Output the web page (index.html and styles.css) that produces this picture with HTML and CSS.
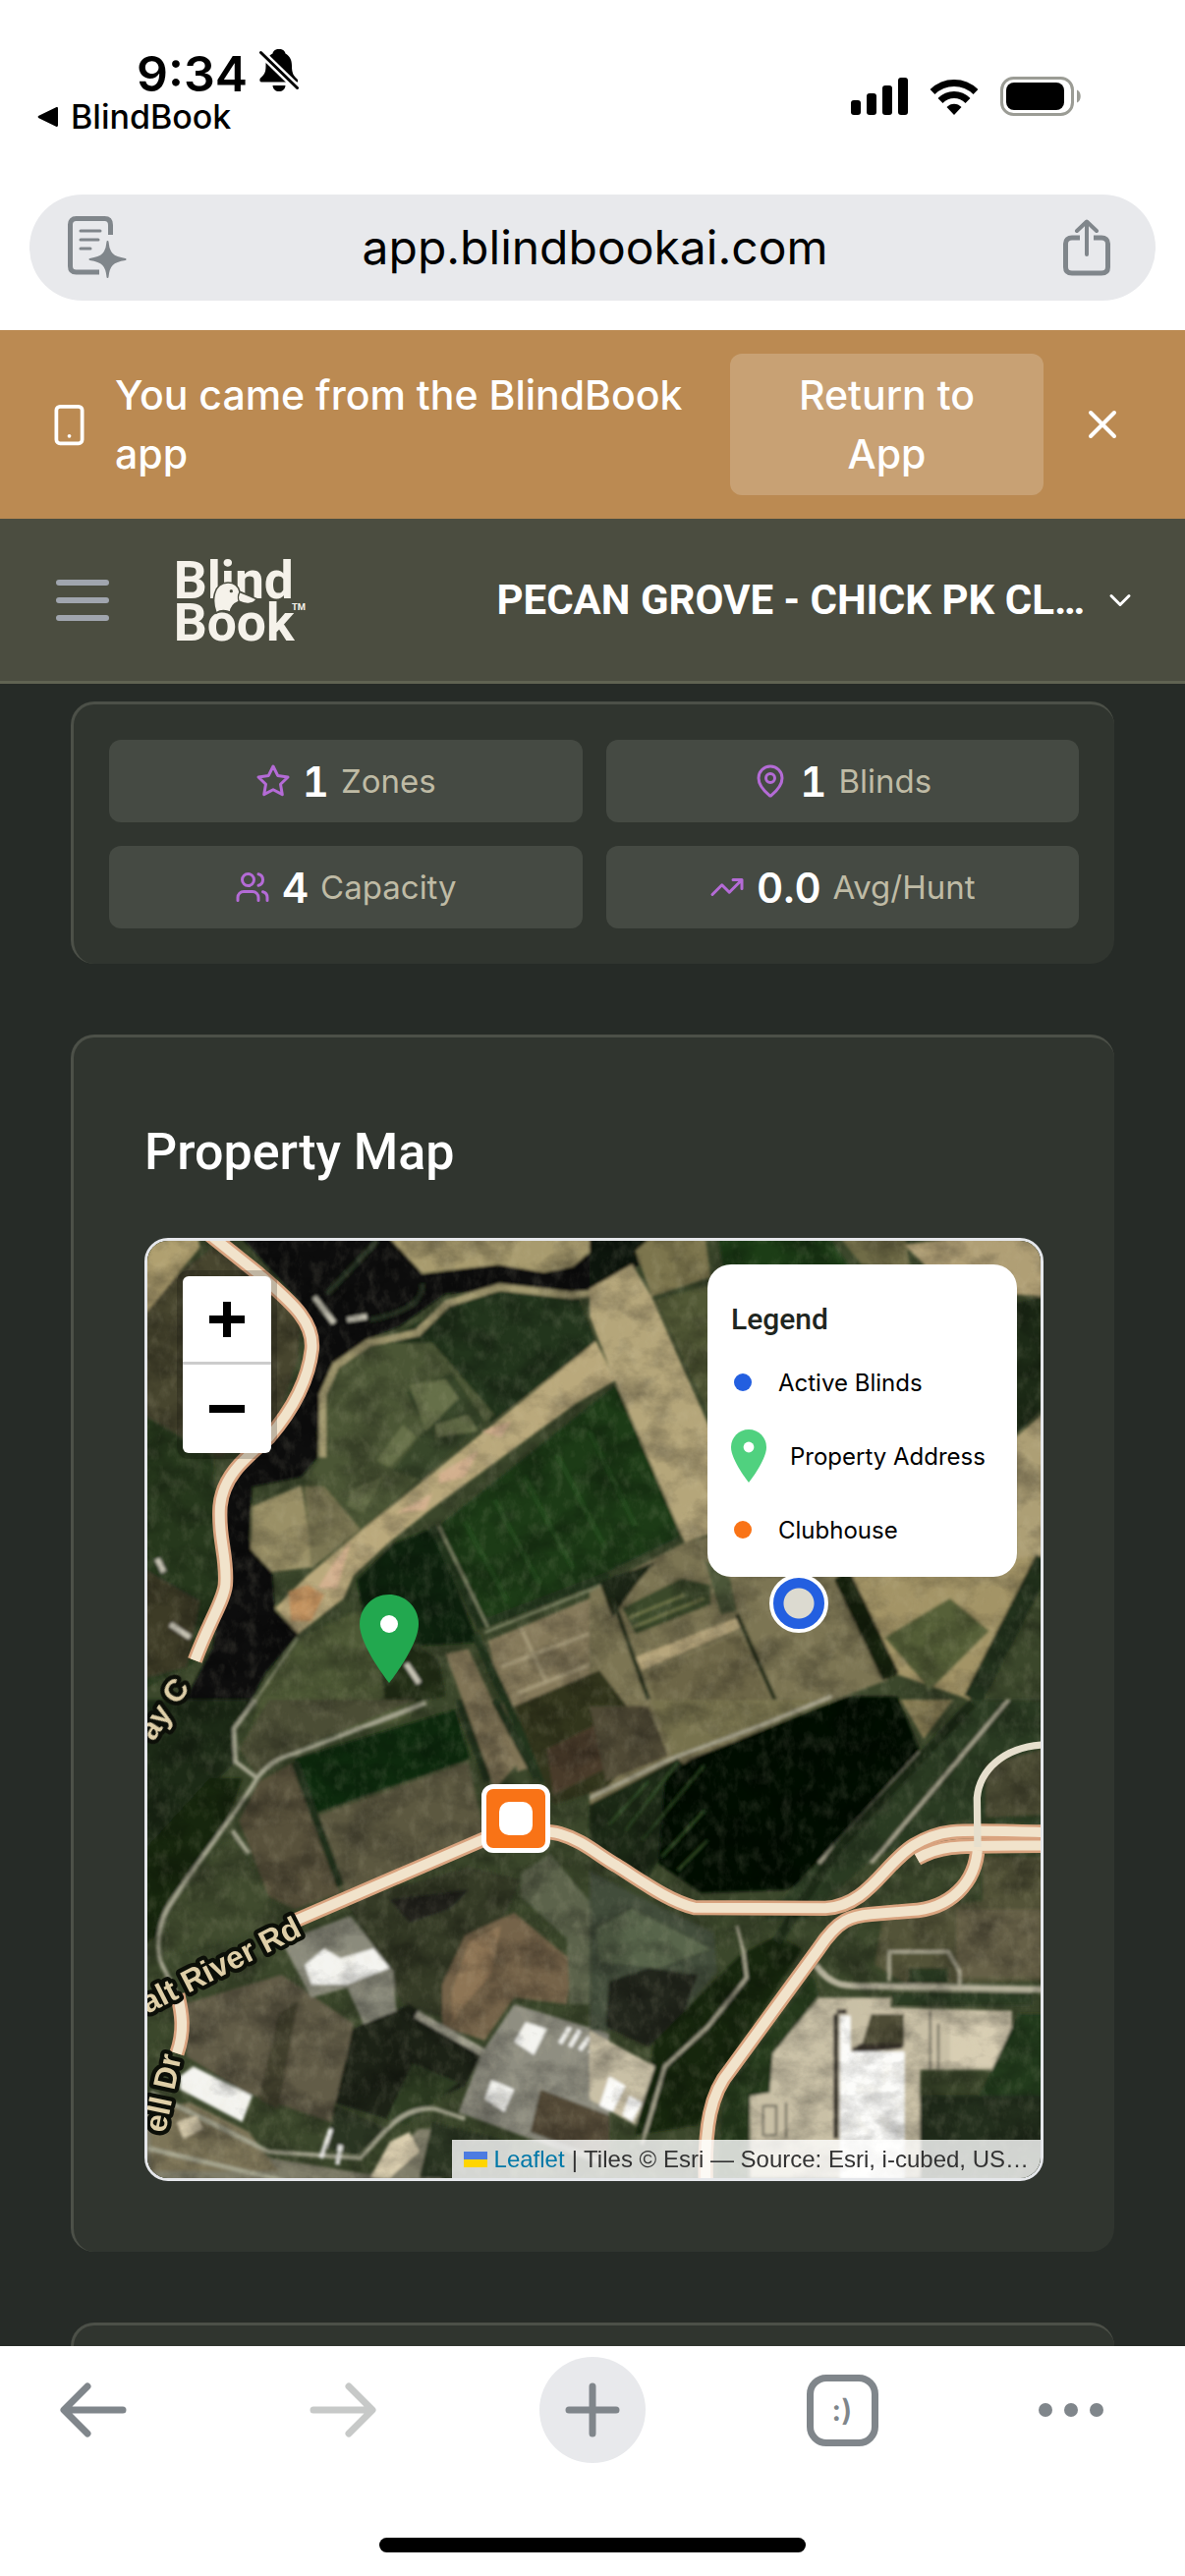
FILE: index.html
```html
<!DOCTYPE html>
<html lang="en">
<head>
    <meta charset="UTF-8">
    <meta name="viewport" content="width=device-width, initial-scale=1">
    <title>BlindBook</title>
    <link rel="stylesheet" href="styles.css">
</head>
<body>
<div class="status">
    <div class="status-left">
        <div class="clock">
            <span>9:34</span>
            <svg class="bell" viewBox="0 0 40 44" aria-hidden="true">
                <path d="M20 0c4 0 6 2 6.500 4.500C31 7 33 11 33 17c0 8 2 10 5 13 1 1 1.500 2 1 3.500H2.500C0 33.500 0 31 1 29.500 5 26 6.500 24 6.500 17c0-6 2-10 7-12.500C14 2 16 0 20 0zM13.500 37h13c-.5 4-3 6-6.500 6s-6-2-6.500-6z"/>
                <path d="M1 3l38 37" stroke="#fff" stroke-width="8"/>
                <path d="M1.500 3.500l37 36" stroke="#000" stroke-width="3" stroke-linecap="round"/>
            </svg>
        </div>
        <a class="back-app" href="#">
            <svg class="triangle" viewBox="0 0 22 22" aria-hidden="true"><path d="M1.500 9.800L19 1.300c1.200-.5 2 0 2 1.200v17c0 1.200-.8 1.700-2 1.200L1.500 12.200c-1.200-.7-1.200-1.700 0-2.400z"/></svg>
            <span>BlindBook</span>
        </a>
    </div>
    <div class="status-right">
        <svg class="signal" viewBox="0 0 58 38" aria-hidden="true">
            <rect x="0" y="23" width="10" height="15" rx="3"/>
            <rect x="16" y="16" width="10" height="22" rx="3"/>
            <rect x="32" y="8" width="10" height="30" rx="3"/>
            <rect x="48" y="0" width="10" height="38" rx="3"/>
        </svg>
        <svg class="wifi" viewBox="0 0 52 38" aria-hidden="true">
            <path d="M26 38l-7.500-8c4-4.500 11-4.500 15 0z"/>
            <path d="M12 23.500c8-8 20-8 28 0M4 14.500c12.500-12 31.500-12 44 0" fill="none" stroke="#000" stroke-width="7"/>
        </svg>
        <svg class="battery" viewBox="0 0 84 40" aria-hidden="true">
            <rect x="1.500" y="1.500" width="72" height="37" rx="12" fill="none" stroke="#9b9c95" stroke-width="3"/>
            <rect x="6" y="6" width="59" height="28" rx="8"/>
            <path d="M78 13.500c5 2 5 11 0 13z" fill="#9b9c95"/>
        </svg>
    </div>
</div>

<div class="address">
    <button class="plain" type="button" aria-label="Reader">
        <svg class="page-icon" viewBox="0 0 60 64" fill="none" stroke="#80868b" aria-hidden="true">
            <path d="M43.500 19V9c0-4-2-6.500-6-6.500H8.500c-4 0-6 2.500-6 6v42.500c0 4 2 6 6 6H32" stroke-width="5"/>
            <path d="M13 15h20M13 24h18M13 33h10" stroke-width="3" stroke-linecap="round"/>
            <path d="M40.500 26c1 12 5 16 18 18-13 2-17 6-18 18-1-12-5-16-18-18 13-2 17-6 18-18z" fill="#80868b" stroke-width="2" stroke-linejoin="round"/>
        </svg>
    </button>
    <input class="url" type="text" value="app.blindbookai.com" aria-label="Address" readonly>
    <button class="plain" type="button" aria-label="Share">
        <svg class="share-icon" viewBox="0 0 48 58" fill="none" stroke="#80868b" aria-hidden="true">
            <path d="M17 19H9c-4 0-6.500 2.500-6.500 6v24c0 4 2.500 6 6.500 6h30c4 0 6.500-2 6.500-6V25c0-3.500-2.500-6-6.500-6h-8" stroke-width="5"/>
            <path d="M24 36V3M14 12L24 2.500l10 9.500" stroke-width="4" stroke-linecap="round" stroke-linejoin="round"/>
        </svg>
    </button>
</div>

<div class="banner">
    <svg class="phone-icon" viewBox="0 0 24 24" aria-hidden="true">
        <rect x="5" y="2" width="14" height="20" rx="2"/>
        <path d="M12 18h.01"/>
    </svg>
    <p class="banner-text">You came from the BlindBook app</p>
    <button class="return" type="button">Return to App</button>
    <button class="close" type="button" aria-label="Close">
        <svg class="close-icon" viewBox="0 0 24 24" aria-hidden="true"><path d="M18 6L6 18M6 6l12 12"/></svg>
    </button>
</div>

<header class="header">
    <button class="plain" type="button" aria-label="Menu">
        <svg class="menu-icon" viewBox="0 0 24 24" aria-hidden="true"><path d="M4 6h16M4 12h16M4 18h16"/></svg>
    </button>
    <svg class="logo" viewBox="54 50 402 270" role="img" aria-label="BlindBook">
        <g fill="#f5f2ea" font-family="Roboto, sans-serif" font-weight="700">
            <text x="50" y="178" font-size="160">Blind</text>
            <text x="50" y="308" font-size="160">Book</text>
            <text x="411" y="214" font-size="28">TM</text>
            <path d="M180 224c-14-36-10-92 36-93 20 0 32 12 36 28l52 22c-10 18-36 18-54 8-14 6-26 16-26 33-14-6-32-6-44 2z" stroke="#4b4d40" stroke-width="5"/>
        </g>
        <path d="M252 160c-6 10-6 20-2 30" fill="none" stroke="#4b4d40" stroke-width="4"/>
        <circle cx="226" cy="157" r="5" fill="#4b4d40"/>
    </svg>
    <button class="club" type="button">
        <span>PECAN GROVE - CHICK PK CL…</span>
        <svg class="chevron" viewBox="0 0 24 24" aria-hidden="true"><path d="M6 9l6 6 6-6"/></svg>
    </button>
</header>

<main class="main">
    <section class="card stats">
        <div class="stat">
            <svg class="stat-icon" viewBox="0 0 24 24" aria-hidden="true"><path d="M12 2l3.100 6.300 6.900 1-5 4.900 1.200 6.900L12 17.800l-6.200 3.300L7 14.200 2 9.300l6.900-1z"/></svg>
            <strong>1</strong><span>Zones</span>
        </div>
        <div class="stat">
            <svg class="stat-icon" viewBox="0 0 24 24" aria-hidden="true"><path d="M20 10c0 5-5.500 10.200-7.400 11.800a1 1 0 0 1-1.200 0C9.500 20.200 4 15 4 10a8 8 0 0 1 16 0"/><circle cx="12" cy="10" r="3"/></svg>
            <strong>1</strong><span>Blinds</span>
        </div>
        <div class="stat">
            <svg class="stat-icon" viewBox="0 0 24 24" aria-hidden="true"><path d="M16 21v-2a4 4 0 0 0-4-4H6a4 4 0 0 0-4 4v2"/><circle cx="9" cy="7" r="4"/><path d="M22 21v-2a4 4 0 0 0-3-3.870M16 3.130a4 4 0 0 1 0 7.750"/></svg>
            <strong>4</strong><span>Capacity</span>
        </div>
        <div class="stat">
            <svg class="stat-icon" viewBox="0 0 24 24" aria-hidden="true"><path d="M22 7l-8.500 8.500-5-5L2 17M16 7h6v6"/></svg>
            <strong>0.0</strong><span>Avg/Hunt</span>
        </div>
    </section>

    <section class="card property">
        <h2>Property Map</h2>
        <div class="map">
            <svg class="tiles" viewBox="30 39 2727 2862" preserveAspectRatio="xMidYMid slice" aria-hidden="true">
                <defs>
                    <filter id="soft"><feGaussianBlur stdDeviation="4"/></filter>
                    <filter id="grain" x="0" y="0" width="100%" height="100%">
                        <feTurbulence type="fractalNoise" baseFrequency="0.008 0.011" numOctaves="5" seed="7"/>
                        <feColorMatrix values="0 0 0 0 0  0 0 0 0 0  0 0 0 0 0  2 0 0 0 -.8"/>
                    </filter>
                    <filter id="light" x="0" y="0" width="100%" height="100%">
                        <feTurbulence type="fractalNoise" baseFrequency="0.03 0.02" numOctaves="4" seed="21"/>
                        <feColorMatrix values="0 0 0 0 .75  0 0 0 0 .7  0 0 0 0 .5  0 2 0 0 -.9"/>
                    </filter>
                </defs>
                <rect x="0" y="0" width="2800" height="2940" fill="#3b472b"/>
                <g filter="url(#soft)">
                    <!-- north west -->
                    <path fill="#46452f" d="M0 250L150 120 230 60l270 190-10 150-70 200-170 100L0 560z"/>
                    <path fill="#b0a06f" d="M0 0h180l10 60L0 290z"/>
                    <path fill="#26391f" d="M0 560l230 140 20 450-80 180L0 1420z"/>
                    <path fill="#3d3a28" d="M0 1030l190 110-40 200L0 1380z"/>
                    <path fill="#071109" d="M290 0h470l110 140 230-30 150 25 80-25 160-110v190l-150 10-240-10-160 10-140 100-100 40-100 80-40 80-10 200-50 60-150 30-10 160 70 100 10 120 70 70-100 120-90 170-110 40-50-120 90-170 40-260-20-200 90-150 150-160 60-160-60-130z"/>
                    <path fill="none" stroke="#263322" stroke-width="14" d="M580 200L730 40M870 170c0 60-60 90-160 110"/>
                    <path fill="#a89b6e" d="M740 0h720l-130 118-90 17-140-23-230 26z"/>
                    <path fill="#21341a" d="M930 240l170-50 240 10 60 150-320 240-190-130-150-100z"/>
                    <path fill="#4c5735" d="M600 440l100-90 200 0 190 220-90 70-320 290-150 110-30-240 60-100 10-200z"/>
                    <path fill="#38472a" d="M820 500l60 110-100 130 90 30 130-130 60-50-100-150z"/>
                    <path fill="#667048" d="M830 480l110-20 40 60-100 100zM910 600l100-30 30 50-130 20zM730 710l80-110 40 40-80 90zM650 800l100-40-60 110-50-20z"/>
                    <path fill="none" stroke="#a39a70" stroke-width="22" d="M565 700l0-190 40-90 100-70 150-30 90-90 160-50 220 25 70-5"/>
                    <path fill="#9a9066" d="M350 850l150-65 40 250-130 15-65-70z"/>
                    <path fill="#7b7752" d="M510 790l60 0 110 130-150 120z"/>
                    <path fill="#baa97c" d="M1400 345l60 120-120 70-440 320-120 95-120 110-30 70-140 110-70-80 100-100 180-150z"/>
                    <path fill="#d3b08e" d="M920 750l120-70-40 80-80 20zM790 870l110-60-20 50zM600 1020l50-60-40 140-60 0zM1050 620l90-30-30 50z"/>
                    <path fill="#c4935f" d="M460 1110l60-20 50 30-40 80-60 0z"/>
                    <path fill="#1b3a15" d="M920 910l540-430 200 460-290 140-320 130z"/>
                    <path fill="none" stroke="#244a1d" stroke-width="14" d="M1000 900l130 240M1090 830l140 260M1180 760l150 280M1280 690l150 290M1380 620l140 290"/>
                    <path fill="#0c240a" d="M900 915l-120 50-110 110 20 110 170 90 180-10z"/>
                    <path fill="#4e5835" d="M500 1250l170-80 60 90 110 60-100 120 150 10-100 60-430 80 0-150z"/>
                    <path fill="#85795a" d="M1070 1260l360-150 90 300-170 190-190 60z"/>
                    <path fill="none" stroke="#a39777" stroke-width="12" d="M1170 1220l80 170M1110 1340l320-120M1160 1420l280-110"/>
                    <path fill="#232d19" d="M730 1280l100-20 90 60 20 110-180 30z"/>
                    <path fill="#7f7354" d="M940 1300l70-15 160 340-80 90z"/>
                    <path fill="none" stroke="#24361c" stroke-width="26" d="M1030 1240l210 450M1050 1210l390-150M900 910l150 310"/>
                    <path fill="none" stroke="#8a9070" stroke-width="7" d="M920 910l150 310M490 1250l-130 190M1060 1235l385-155"/>
                    <path fill="none" stroke="#c7c4b5" stroke-width="16" d="M540 210l60 80M640 280l60-10M60 1010l20 40M100 1210l60 40M820 1330l40 60"/>
                    <!-- north east -->
                    <g transform="translate(1380 0)">
                        <path fill="#0b160b" d="M0 20h260l-100 90-160 80z"/>
                        <path fill="#7b754e" d="M140 70l80-70 130 0 20 150-180 60z"/>
                        <path fill="#1a3d16" d="M390 0h320l90 130-390 0z"/>
                        <path fill="#6f6c46" d="M740 0h220l20 130-150-20z"/>
                        <path fill="#b09f74" d="M960 50l240-30 200 0 0 190-300-20z"/>
                        <path fill="#b5a67a" d="M0 185l130-75 60 100 190 430 0 290-90 30L70 450 0 270z"/>
                        <path fill="#515936" d="M200 220l180-50 0 430z"/>
                        <path fill="#1c2a18" d="M1300 230l80-20 0 340-80 80z"/>
                        <path fill="#ad9f74" d="M1300 640l90-80 0 430-90 90z"/>
                        <path fill="#7c7552" d="M0 1110l290-150 80-20 390 120 150 320-240 90-280 120-390 180z"/>
                        <path fill="#3b4a29" d="M100 1160l180-90 90 20 0 60-230 90z"/>
                        <path fill="none" stroke="#6f7548" stroke-width="8" d="M120 1190l170-70M130 1220l220-90"/>
                        <path fill="#b7a67b" d="M140 1310l310-120 10 30-300 130z"/>
                        <path fill="#6d6646" d="M180 1360l280-120 100 220-330 110z"/>
                        <path fill="#1a2615" d="M30 1080l170-60-60 70-70 100z"/>
                        <path fill="#4c5638" d="M350 1010l80 60 20 100-50 10z"/>
                        <path fill="#a39466" d="M790 1060l590-60-220 440-230-80z"/>
                        <path fill="#566138" d="M900 1250l200-120 120 100-180 180z"/>
                        <path fill="none" stroke="#28301d" stroke-width="14" d="M70 1130l110 310M450 1180l120 270"/>
                        <path fill="none" stroke="#17210f" stroke-width="55" d="M770 1060l150 310"/>
                        <path fill="none" stroke="#22301a" stroke-width="60" d="M1390 1010l-220 430"/>
                    </g>
                    <!-- south west -->
                    <g transform="translate(0 1440)">
                        <path fill="#1d2b18" d="M0 0h360l-65 90 5 100L30 450 0 460z"/>
                        <path fill="#17260f" d="M0 480l220-240 100 0-60 160L90 620 60 720 0 760z"/>
                        <path fill="#4c4e34" d="M310 150l90-150 450 0-380 160-100 80z"/>
                        <path fill="#0f290c" d="M480 180l490-150 45 150-485 170z"/>
                        <path fill="#5c5841" d="M530 360l480-170 50 220-430 180z"/>
                        <path fill="#58513a" d="M310 370l60-120 110-60 140 400-140 50-80-40z"/>
                        <path fill="#414c2e" d="M90 640l200-230 110 190 30 100-350 80z"/>
                        <path fill="#33361f" d="M1150 20l260-110 160 210-140 150-160 50z"/>
                        <path fill="#4a3b2a" d="M1250 150l180-90 60 120-220 110z"/>
                        <path fill="#343a27" d="M640 620l370-110 160 40-40 90-200 330-120-40z"/>
                        <path fill="#23231c" d="M770 610l240-30-60 60-120 40z"/>
                        <path fill="#74644a" d="M1000 720l150-70 180 150-20 130-160-20-90 130-130-40 0-130z"/>
                        <path fill="#8e7455" d="M1010 740l100-50-30 150-80 90-40 60 0-100z"/>
                        <path fill="#5b634b" d="M1170 530l90-60 190 230 0 230-130 0-10-200-140-130z"/>
                        <path fill="#1a2117" d="M690 990l140-60 220 150-50 100-240 100-160-50 50-220z"/>
                        <path fill="#2d3d22" d="M840 1110l140 60-160 130-60-20z"/>
                        <path fill="#625c46" d="M140 930l300-90 220 150-70 300-260-90-180-110z"/>
                        <path fill="#484633" d="M430 960l60-40-60 330-60-30z"/>
                        <path fill="#8b8b7c" d="M440 740l210-80 130 170 10 120-100 40-50-110-110 30z"/>
                        <path fill="#7f7d69" d="M30 1220l380 180 300 50 150-140 120 0-60 180-920 20z"/>
                        <path fill="#7d7558" d="M40 1250l120-20 180 90 90 120-390 0z"/>
                        <path fill="#293620" d="M600 1240l160 70-90 80-90-20zM900 1290l240 60 0 110-280 0z"/>
                        <path fill="#8f8e81" d="M1150 930l290 90 0 410-460-170 70-180z"/>
                        <path fill="#544b38" d="M1230 1190l210 80 0 140-240-90z"/>
                        <path fill="none" stroke="#a6a690" stroke-width="13" d="M360 0l-65 90 5 100 65 50C300 350 150 540 90 640c-30 60-30 130-20 160l50 100M365 240c40-50 65-60 115-75L880 10M290 400l50 70M30 1370l420 100M40 1200l360 180 280 20c80-80 120-160 230-150l90 30"/>
                        <path fill="none" stroke="#a9a795" stroke-width="24" d="M850 960l210 120"/>
                        <path fill="#f4f4f0" d="M510 810l60-50 50 30 100-30 50 60-130 50-110 0zM130 1150l40-30 180 90-30 80-190-100zM1185 985l65 20-40 80-60-40zM1080 1160l70 30-30 70-60-40z"/>
                        <path fill="#d9cdae" d="M770 1350l60-30 30 60-90 80-60 0zM120 1290l60-20 20 40-60 30z"/>
                        <path fill="none" stroke="#eeeeea" stroke-width="14" d="M1290 1050l30-50M1320 1060l30-50M1350 1070l30-40M1380 1080l30-30M560 1400l30-90M610 1420l10-60"/>
                        <path fill="none" stroke="#23321b" stroke-width="24" d="M980 0l90 250M1090 0l130 240M480 190l140 380"/>
                    </g>
                    <!-- south east -->
                    <g transform="translate(1380 1440)">
                        <path fill="#1e2c16" d="M0 320l270-140 60 60-160 330L0 440z"/>
                        <path fill="#77724d" d="M190 0h560L260 180z"/>
                        <path fill="#4f4935" d="M0 20h180l60 150-190 80z"/>
                        <path fill="#041106" d="M230 240l80-60 480-190 150 0 70 170-180 210-190 210-300 10-130-90z"/>
                        <path fill="#8b8057" d="M950 0h160l-90 120z"/>
                        <path fill="#2c3b22" d="M1010 170L1170 0h230l0 380-300-10-240 120-200 180-130 0z"/>
                        <path fill="#4a4a33" d="M1210 200l180-50 0 200-180 10z"/>
                        <path fill="#525337" d="M1200 480h190v150h-190zM900 640l490-40 0 260-420 10-100-60z"/>
                        <path fill="#666047" d="M1120 640h260v210h-260z"/>
                        <path fill="#424d3a" d="M0 520l130 70 250 120 10 120-150 180-240 0z"/>
                        <path fill="#59654b" d="M20 700l110-60 240 120-160 60-180-20z"/>
                        <path fill="#24251e" d="M60 860l120-40 150 20-40 110-110 110-130-60z"/>
                        <path fill="#14260f" d="M200 1040l260-260 110-60 80 40-220 340-100 200-190 30z"/>
                        <path fill="#253a1f" d="M410 1200l270-360 20 60-140 190-10 120-60 10-10 240-90 0z"/>
                        <path fill="#c9c0a6" d="M0 1010l200 110-60 180-140-80zM700 910h220v30l370 10v180h-280v330H490v-250l60-10 10-120z"/>
                        <path fill="#d8ceb3" d="M1100 990h180v130h-180z"/>
                        <path fill="#232d1b" d="M1010 1210h380v250h-380z"/>
                        <path fill="#203a1c" d="M1310 960h80v250h-200z"/>
                        <path fill="#4e4c35" d="M860 960h100v100h-130z"/>
                        <path fill="#2c3a24" d="M920 895h430v38H930zM975 820h120v45H975z"/>
                        <path fill="#37332c" d="M755 945h30v15h-30zM800 1065l30-15 125 0 0 15-150 15zM745 960h15v380h-15z"/>
                        <path fill="#fcfcfa" d="M765 965h32v110h165v390H765zM60 1150l50 30-40 80-40-20zM120 1210l40 20-30 60-30-20z"/>
                        <path fill="none" stroke="#a8a58f" stroke-width="10" d="M0 300l250-120 270-100L740-10M1010 160L700 500M450 690l20 80 10 80-120 150-130 120-70 240M1280 0L860 500M915 860v-90h180l35 60v50"/>
                        <path fill="none" stroke="#b5b19b" stroke-width="20" d="M690 810c50 70 90 65 190 65l510 10"/>
                        <path fill="none" stroke="#1d2c18" stroke-width="30" d="M1170 10l-170 180-240 260-190 290"/>
                        <path fill="none" stroke="#37562b" stroke-width="5" d="M60 380l120-130M110 400l160-210M160 430l190-230M220 480l130-140M270 520l90-90"/>
                        <path fill="none" stroke="#6f6c5e" stroke-width="7" d="M530 1240h40v90h-40zM600 1230v110M1040 950v180M1065 990v140"/>
                    </g>
                </g>
                <rect x="0" y="0" width="2800" height="2940" filter="url(#grain)" opacity=".35"/>
                <rect x="0" y="0" width="2800" height="2940" filter="url(#light)" opacity=".14"/>
                <!-- roads: casing, then surface -->
                <g fill="none" stroke="#d9a37f" stroke-width="46">
                    <path d="M220 20l150 120c90 80 170 140 162 230-12 110-72 200-132 270-80 70-140 120-148 210-7 100 23 150 16 240-6 50-48 110-93 230"/>
                    <path d="M470 2120l590-255c70-20 180-30 230-15 70 20 110 60 170 95 80 50 160 110 240 130l400 2c130-7 180-137 270-192 90-55 140-45 400-40"/>
                    <path d="M1735 2920c-5-180 15-280 75-350l270-370c60-90 100-100 160-105l120-10c120-5 200-85 205-195M2380 1925c80-45 120-38 400-40"/>
                    <path d="M122 2340c14 60 22 110-2 180"/>
                </g>
                <g fill="none" stroke="#f1e3cb" stroke-width="30">
                    <path d="M220 20l150 120c90 80 170 140 162 230-12 110-72 200-132 270-80 70-140 120-148 210-7 100 23 150 16 240-6 50-48 110-93 230"/>
                    <path d="M470 2120l590-255c70-20 180-30 230-15 70 20 110 60 170 95 80 50 160 110 240 130l400 2c130-7 180-137 270-192 90-55 140-45 400-40"/>
                    <path d="M1735 2920c-5-180 15-280 75-350l270-370c60-90 100-100 160-105l120-10c120-5 200-85 205-195M2380 1925c80-45 120-38 400-40"/>
                    <path d="M122 2340c14 60 22 110-2 180"/>
                    <path d="M2565 1890l-2-150c7-80 77-160 217-163" stroke="#e6dfcd" stroke-width="22"/>
                </g>
                <g class="road-names">
                    <text transform="translate(48 1570) rotate(-56)">ay C</text>
                    <text transform="translate(30 2400) rotate(-27)">alt River Rd</text>
                    <text transform="translate(84 2765) rotate(-78)">ell Dr</text>
                </g>
            </svg>

            <div class="zoom">
                <button type="button" aria-label="Zoom in"><svg class="zoom-icon" viewBox="0 0 36 36" aria-hidden="true"><path d="M18 0v36M0 18h36"/></svg></button>
                <button type="button" aria-label="Zoom out"><svg class="zoom-icon" viewBox="0 0 36 36" aria-hidden="true"><path d="M0 18h36"/></svg></button>
            </div>

            <svg class="marker address-pin" viewBox="0 0 60 90" aria-hidden="true">
                <path d="M30 0C13.400 0 0 13.400 0 30c0 22.500 30 60 30 60s30-37.500 30-60C60 13.400 46.600 0 30 0z" fill="#22a84f"/>
                <circle cx="30" cy="30" r="9" fill="#fff"/>
            </svg>
            <span class="marker blind-marker"></span>
            <span class="marker club-marker"></span>

            <div class="legend">
                <h3>Legend</h3>
                <ul>
                    <li><i class="dot blue"></i>Active Blinds</li>
                    <li class="tall">
                        <svg class="legend-pin" viewBox="0 0 60 90" aria-hidden="true">
                            <path d="M30 0C13.400 0 0 13.400 0 30c0 22.500 30 60 30 60s30-37.500 30-60C60 13.400 46.600 0 30 0z" fill="#50d17f"/>
                            <circle cx="30" cy="30" r="9" fill="#fff"/>
                        </svg>Property Address</li>
                    <li><i class="dot orange"></i>Clubhouse</li>
                </ul>
            </div>

            <div class="attribution">
                <svg class="flag" viewBox="0 0 24 16" aria-hidden="true"><path fill="#4c7be1" d="M0 0h24v8H0z"/><path fill="#ffd500" d="M0 8h24v8H0z"/></svg>
                <a href="#">Leaflet</a> | Tiles © Esri — Source: Esri, i-cubed, US…
            </div>
        </div>
    </section>

    <section class="card next"></section>
</main>

<footer class="toolbar">
    <nav>
        <button type="button" aria-label="Back"><svg class="nav-icon" viewBox="0 0 68 56" aria-hidden="true"><path d="M64 28H5M28 4L4 28l24 24"/></svg></button>
        <button class="off" type="button" aria-label="Forward"><svg class="nav-icon" viewBox="0 0 68 56" aria-hidden="true"><path d="M4 28h59M40 4l24 24-24 24"/></svg></button>
        <button class="new-tab" type="button" aria-label="New tab"><svg class="nav-icon" viewBox="0 0 68 56" aria-hidden="true"><path d="M34 4v48M10 28h48"/></svg></button>
        <button type="button" aria-label="Tabs"><span class="tabs">:)</span></button>
        <button class="more" type="button" aria-label="More"><svg class="nav-icon" viewBox="0 0 68 56" aria-hidden="true"><g fill="#80868b" stroke="none"><circle cx="7" cy="28" r="7"/><circle cx="33" cy="28" r="7"/><circle cx="59" cy="28" r="7"/></g></svg></button>
    </nav>
    <div class="home"></div>
</footer>
</body>
</html>
```

FILE: styles.css
```css
* {
    box-sizing: border-box;
    margin: 0;
    padding: 0;
}

body {
    display: flex;
    flex-direction: column;
    height: 100vh;
    background: #262b27;
    color: white;
    font-family: Inter, Roboto, sans-serif;
    overflow: hidden;
}

button {
    border: 0;
    background: none;
    color: inherit;
    font: inherit;
}

svg {
    display: block;
    flex: none;
}

.plain {
    display: flex;
}

/* phone status bar */
.status {
    display: flex;
    justify-content: space-between;
    align-items: flex-start;
    height: 198px;
    flex: none;
    padding: 45px 104px 0 38px;
    background: white;
    color: black;
}

.clock {
    display: flex;
    align-items: center;
    gap: 12px;
    height: 54px;
    padding-left: 101px;
    font-size: 50px;
    line-height: 60px;
    font-weight: 600;
}

.clock span {
    padding-top: 6px;
}

.bell {
    width: 40px;
    height: 44px;
}

.back-app {
    display: flex;
    align-items: center;
    gap: 12px;
    color: black;
    font-size: 34px;
    line-height: 39px;
    font-weight: 500;
    text-decoration: none;
}

.triangle {
    width: 22px;
    height: 22px;
}

.status-right {
    display: flex;
    align-items: center;
    gap: 21px;
    height: 105px;
}

.signal {
    width: 58px;
    height: 38px;
}

.wifi {
    width: 52px;
    height: 38px;
}

.battery {
    width: 84px;
    height: 40px;
}

/* browser address bar */
.address {
    position: relative;
    z-index: 0;
    display: flex;
    align-items: center;
    height: 138px;
    flex: none;
    padding: 0 76px 30px 69px;
    background: white;
}

.address::before {
    content: "";
    position: absolute;
    z-index: -1;
    inset: 0 30px 30px;
    border-radius: 54px;
    background: #e8e9ec;
}

.url {
    flex: 1;
    min-width: 0;
    border: 0;
    outline: 0;
    background: none;
    color: black;
    font: 48px/60px Inter, Roboto, sans-serif;
    text-align: center;
}

.page-icon {
    width: 60px;
    height: 64px;
}

.share-icon {
    width: 48px;
    height: 58px;
}

/* return banner */
.banner {
    display: flex;
    align-items: center;
    gap: 24px;
    flex: none;
    padding: 24px 48px;
    background: #bb8a52;
    font-size: 41px;
    line-height: 60px;
    font-weight: 500;
}

.phone-icon, .close-icon, .menu-icon, .chevron, .stat-icon {
    fill: none;
    stroke: white;
    stroke-width: 2;
    stroke-linecap: round;
    stroke-linejoin: round;
}

.phone-icon {
    width: 45px;
    height: 45px;
}

.banner-text {
    flex: 1;
}

.return {
    width: 319px;
    padding: 12px 48px;
    border-radius: 12px;
    background: rgba(255, 255, 255, .2);
}

.close {
    padding: 12px;
}

.close-icon {
    width: 48px;
    height: 48px;
}

/* app header */
.header {
    display: flex;
    align-items: center;
    height: 168px;
    flex: none;
    padding: 0 48px;
    background: #4b4d40;
    border-bottom: 3px solid #606352;
}

.menu-icon {
    width: 72px;
    height: 72px;
    stroke: #a0a5ae;
}

.logo {
    width: 134px;
    height: 90px;
    margin-left: 58px;
}

.club {
    display: flex;
    align-items: center;
    gap: 18px;
    margin-left: auto;
    font: 700 42px/60px Roboto, sans-serif;
}

.chevron {
    width: 36px;
    height: 36px;
}

.main {
    display: flex;
    flex-direction: column;
    gap: 72px;
    flex: 1;
    min-height: 0;
    padding: 18px 72px 0;
    overflow: hidden;
}

.card {
    flex: none;
    border: 3px solid #4c5048;
    border-right: 0;
    border-bottom: 0;
    border-radius: 24px;
    background: #30352f;
}

.stats {
    display: grid;
    grid-template-columns: 1fr 1fr;
    gap: 24px;
    padding: 36px;
}

.stat {
    display: flex;
    justify-content: center;
    align-items: center;
    gap: 12px;
    height: 84px;
    border-radius: 12px;
    background: #454a43;
}

.stat strong {
    font-size: 42px;
    font-weight: 600;
    font-variant-numeric: tabular-nums;
}

.stat span {
    color: #bfbba5;
    font-size: 33px;
}

.stat-icon {
    width: 36px;
    height: 36px;
    stroke: #b46bd6;
}

.property {
    padding: 72px;
}

.property h2 {
    margin-bottom: 42px;
    font: 500 52px/90px Roboto, sans-serif;
}

.next {
    height: 600px;
}

/* map */
.map {
    position: relative;
    height: 960px;
    border: 3px solid #e5e7eb;
    border-radius: 24px;
    overflow: hidden;
}

.tiles {
    width: 100%;
    height: 100%;
}

.road-names {
    font: 700 96px "Liberation Sans", sans-serif;
    fill: #dfcfa8;
    stroke: #0c0f08;
    stroke-width: 26px;
    stroke-linejoin: round;
    paint-order: stroke;
}

.zoom {
    position: absolute;
    left: 36px;
    top: 36px;
    width: 90px;
    border-radius: 6px;
    background: white;
    box-shadow: 0 0 0 6px rgba(0, 0, 0, .2);
}

.zoom button {
    display: flex;
    justify-content: center;
    align-items: center;
    width: 90px;
    height: 90px;
}

.zoom button:first-child {
    border-bottom: 3px solid #ccc;
}

.zoom-icon {
    width: 36px;
    height: 36px;
    stroke: black;
    stroke-width: 8;
}

.marker {
    position: absolute;
}

.address-pin {
    left: 216px;
    top: 360px;
    width: 60px;
    height: 90px;
}

.blind-marker {
    left: 633px;
    top: 339px;
    width: 60px;
    height: 60px;
    border: 4px solid white;
    border-radius: 50%;
    background: radial-gradient(circle, #dcdad0 15px, #235fe0 16px);
}

.club-marker {
    left: 340px;
    top: 553px;
    width: 70px;
    height: 70px;
    padding: 13px;
    border: 5px solid white;
    border-radius: 12px;
    background: #f97316;
}

.club-marker::before {
    content: "";
    display: block;
    height: 34px;
    border-radius: 10px;
    background: white;
}

.legend {
    position: absolute;
    top: 24px;
    right: 24px;
    width: 315px;
    padding: 30px 24px;
    border-radius: 24px;
    background: white;
    color: black;
}

.legend h3 {
    margin-bottom: 21px;
    color: #1f2621;
    font: 500 30px/51px Roboto, sans-serif;
}

.legend ul {
    display: grid;
    gap: 30px;
    list-style: none;
}

.legend li {
    display: flex;
    align-items: center;
    gap: 24px;
    height: 36px;
    font-size: 24px;
    white-space: nowrap;
}

.legend .tall {
    height: 54px;
}

.dot {
    width: 18px;
    height: 18px;
    margin: 0 3px;
    border-radius: 50%;
}

.blue {
    background: #235fe0;
}

.orange {
    background: #f97316;
}

.legend-pin {
    width: 36px;
    height: 54px;
}

.attribution {
    display: flex;
    align-items: center;
    gap: 7px;
    position: absolute;
    right: 0;
    bottom: 0;
    height: 39px;
    padding: 0 12px;
    background: rgba(255, 255, 255, .8);
    color: #333;
    font: 24px/39px "Liberation Sans", sans-serif;
    white-space: nowrap;
}

.attribution a {
    color: #0078a8;
    text-decoration: none;
}

.flag {
    width: 24px;
    height: 16px;
}

/* browser toolbar */
.toolbar {
    display: flex;
    flex-direction: column;
    justify-content: space-between;
    align-items: center;
    height: 234px;
    flex: none;
    padding: 11px 0 24px;
    background: white;
}

.toolbar nav {
    display: flex;
    justify-content: space-between;
    width: 100%;
    padding: 0 41px;
}

.toolbar button {
    display: flex;
    justify-content: center;
    align-items: center;
    width: 108px;
    height: 108px;
    border-radius: 50%;
}

.toolbar .more {
    justify-content: flex-start;
}

.toolbar .new-tab {
    background: #e8e9ec;
}

.nav-icon {
    width: 68px;
    height: 56px;
    fill: none;
    stroke: #80868b;
    stroke-width: 7;
    stroke-linecap: round;
    stroke-linejoin: round;
}

.off .nav-icon {
    stroke: #c7c9c8;
}

.tabs {
    display: flex;
    justify-content: center;
    align-items: center;
    width: 73px;
    height: 73px;
    border: 7px solid #80868b;
    border-radius: 20px;
    color: #80868b;
    font-size: 30px;
    font-weight: 600;
}

.home {
    width: 36%;
    height: 15px;
    border-radius: 8px;
    background: black;
}
```
